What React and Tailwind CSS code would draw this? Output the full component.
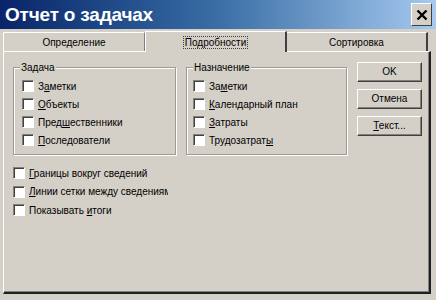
import { useState } from 'react';

const sysFont = "font-['Liberation_Sans',Arial,sans-serif]";

function Label({ text, u }) {
  // u = index of the underlined mnemonic letter
  if (u === undefined) return <span>{text}</span>;
  return (
    <span>
      {text.slice(0, u)}
      <span className="underline underline-offset-[1px]">{text[u]}</span>
      {text.slice(u + 1)}
    </span>
  );
}

function Checkbox({ text, u, checked, onToggle, clip }) {
  return (
    <div className="flex items-center h-[18px] gap-[4px] cursor-default" onClick={onToggle}>
      <div className="w-[12px] h-[12px] shrink-0 bg-white border-t border-l border-[#808080] border-r border-b border-r-white border-b-white shadow-[inset_1px_1px_0_#404040] flex items-center justify-center">
        {checked && (
          <svg width="8" height="8" viewBox="0 0 8 8">
            <path d="M1 4 L3 6 L7 1.5" stroke="#000" strokeWidth="1.6" fill="none" />
          </svg>
        )}
      </div>
      <div className={clip ? 'whitespace-nowrap overflow-hidden w-[139px]' : 'whitespace-nowrap'}>
        <Label text={text} u={u} />
      </div>
    </div>
  );
}

function GroupBox({ title, className, children }) {
  return (
    <div className={`relative border border-[#9d9b95] shadow-[1px_1px_0_#fff,inset_1px_1px_0_#fff] ${className}`}>
      <div className="absolute -top-[7px] left-[6px] px-[1px] bg-[#d4d0c8] leading-[13px]">{title}</div>
      {children}
    </div>
  );
}

function Button({ children }) {
  return (
    <button className="w-[65px] h-[20px] bg-[#d4d0c8] border border-t-white border-l-white border-r-[#404040] border-b-[#404040] shadow-[inset_-1px_-1px_0_#808080] flex items-center justify-center leading-none">
      {children}
    </button>
  );
}

export default function App() {
  const [checks, setChecks] = useState({});
  const toggle = (k) => setChecks((c) => ({ ...c, [k]: !c[k] }));

  const task = [
    { t: 'Заметки', u: 1 },
    { t: 'Объекты', u: 0 },
    { t: 'Предшественники', u: 4 },
    { t: 'Последователи', u: 0 },
  ];
  const assign = [
    { t: 'Заметки', u: 2 },
    { t: 'Календарный план', u: 0 },
    { t: 'Затраты', u: 0 },
    { t: 'Трудозатраты', u: 11 },
  ];
  const extra = [
    { t: 'Границы вокруг сведений', u: 0 },
    { t: 'Линии сетки между сведениями', u: 0, clip: true },
    { t: 'Показывать итоги', u: 11 },
  ];

  return (
    <div className={`w-[436px] h-[300px] bg-[#d4d0c8] overflow-hidden text-[10px] text-black ${sysFont}`}>
      {/* Title bar */}
      <div className="h-[29px] flex items-center justify-between pl-[5px] pr-[4px] bg-gradient-to-r from-[#0a246a] via-[#3a6ea5] to-[#a6caf0]">
        <span className="text-white font-bold text-[19px] leading-none tracking-[-0.2px]">Отчет о задачах</span>
        <div className="w-[21px] h-[23px] bg-[#d4d0c8] border border-t-white border-l-white border-r-[#404040] border-b-[#404040] flex items-center justify-center">
          <svg width="12" height="12" viewBox="0 0 12 12">
            <path d="M1.5 1.5 L10.5 10.5 M10.5 1.5 L1.5 10.5" stroke="#000" strokeWidth="2.4" />
          </svg>
        </div>
      </div>

      <div className="pl-[3px] pr-[5px] pt-[1px]">
        {/* Tabs */}
        <div className="flex h-[21px] items-end">
          <div className="w-[142px] h-[19px] flex items-center justify-center border-t border-l border-white border-r border-r-[#808080]">
            Определение
          </div>
          <div className="w-[142px] h-[21px] flex items-center justify-center border-t border-l border-white border-r-2 border-r-[#404040] -mb-[1px] bg-[#d4d0c8] relative z-10">
            <span className="border border-dotted border-[#404040] px-[1px] leading-[11px]">Подробности</span>
          </div>
          <div className="w-[141px] h-[19px] flex items-center justify-center border-t border-white border-r-2 border-r-[#404040]">
            Сортировка
          </div>
        </div>

        {/* Panel */}
        <div className="h-[243px] border-l border-t border-white border-r-2 border-b-2 border-r-[#202020] border-b-[#202020] shadow-[inset_-1px_-1px_0_#808080] flex pl-[9px] pt-[15px]">
          <div className="flex flex-col">
            <div className="flex gap-[10px]">
              <GroupBox title="Задача" className="w-[163px] h-[88px] pl-[8px] pt-[9px]">
                {task.map((r) => (
                  <Checkbox key={r.t} text={r.t} u={r.u} checked={checks['a' + r.t]} onToggle={() => toggle('a' + r.t)} />
                ))}
              </GroupBox>
              <GroupBox title="Назначение" className="w-[161px] h-[88px] pl-[6px] pt-[9px]">
                {assign.map((r) => (
                  <Checkbox key={r.t} text={r.t} u={r.u} checked={checks['b' + r.t]} onToggle={() => toggle('b' + r.t)} />
                ))}
              </GroupBox>
            </div>
            <div className="pt-[9px] flex flex-col gap-[0.5px]">
              {extra.map((r) => (
                <Checkbox key={r.t} text={r.t} u={r.u} clip={r.clip} checked={checks['c' + r.t]} onToggle={() => toggle('c' + r.t)} />
              ))}
            </div>
          </div>
          <div className="flex flex-col gap-[7px] ml-[10px] -mt-[5px]">
            <Button>OK</Button>
            <Button>Отмена</Button>
            <Button>
              <Label text="Текст..." u={0} />
            </Button>
          </div>
        </div>
      </div>
    </div>
  );
}
